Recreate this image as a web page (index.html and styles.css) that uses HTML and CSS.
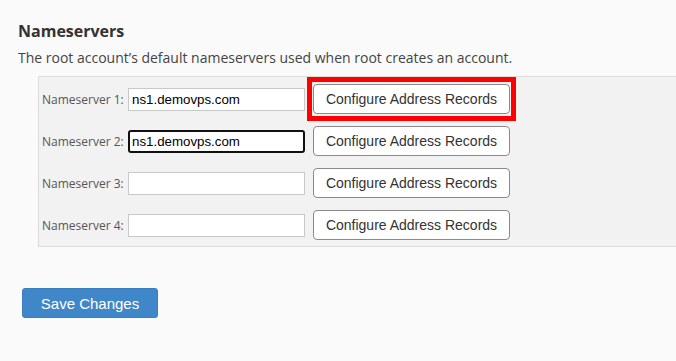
FILE: index.html
```html
<!DOCTYPE html>
<html lang="en">
<head>
    <meta charset="UTF-8">
    <meta name="viewport" content="width=device-width, initial-scale=1.0">
    <title>Nameservers</title>
    <link rel="stylesheet" href="styles.css">
</head>
<body>
    <div class="section">
        <h3 class="section-title">Nameservers</h3>
        <p class="section-desc">The root account’s default nameservers used when root creates an account.</p>

        <div class="ns-table">
            <label class="ns-label" for="ns1">Nameserver 1:</label>
            <input class="ns-input" id="ns1" type="text" value="ns1.demovps.com">
            <div class="btn-wrap highlight">
                <button class="btn-config" type="button">Configure Address Records</button>
            </div>

            <label class="ns-label" for="ns2">Nameserver 2:</label>
            <input class="ns-input focused" id="ns2" type="text" value="ns1.demovps.com">
            <div class="btn-wrap">
                <button class="btn-config" type="button">Configure Address Records</button>
            </div>

            <label class="ns-label" for="ns3">Nameserver 3:</label>
            <input class="ns-input" id="ns3" type="text" value="">
            <div class="btn-wrap">
                <button class="btn-config" type="button">Configure Address Records</button>
            </div>

            <label class="ns-label" for="ns4">Nameserver 4:</label>
            <input class="ns-input" id="ns4" type="text" value="">
            <div class="btn-wrap">
                <button class="btn-config" type="button">Configure Address Records</button>
            </div>
        </div>

        <div class="form-actions">
            <button class="btn-save" type="submit">Save Changes</button>
        </div>
    </div>
</body>
</html>
```

FILE: styles.css
```css
body {
    margin: 0;
    padding: 0;
    background-color: #fafafa;
    font-family: "Open Sans", Arial, sans-serif;
    color: #333;
    overflow: hidden;
}

.section {
    padding: 20px 0 0 18px;
}

.section-title {
    margin: 0;
    font-size: 16px;
    font-weight: 700;
    line-height: 22px;
    color: #333;
}

.section-desc {
    margin: 6px 0 0 0;
    font-size: 14px;
    line-height: 20px;
    color: #444;
}

.ns-table {
    display: grid;
    grid-template-columns: 86px 185px auto;
    justify-content: start;
    align-items: center;
    row-gap: 12px;
    margin: 8px 0 0 20px;
    padding: 7px 0 6px 3px;
    background: #f2f2f2;
    border: 1px solid #dcdcdc;
    border-right: 0;
}

.ns-label {
    font-size: 12px;
    color: #555;
}

.ns-input {
    box-sizing: border-box;
    width: 177px;
    height: 23px;
    padding: 1px 3px;
    border: 1px solid #c8c8c8;
    background: #fff;
    font-family: "Liberation Sans", Arial, sans-serif;
    font-size: 13.3px;
    color: #000;
}

.ns-input.focused {
    border: 2px solid #111;
    border-radius: 3px;
    padding: 0 2px;
}

.btn-wrap {
    position: relative;
    display: flex;
}

/* red marker drawn over the first button */
.btn-wrap.highlight::after {
    content: "";
    position: absolute;
    top: -7px;
    right: -6px;
    bottom: -7px;
    left: -6px;
    border: 5px solid #ff0000;
}

.btn-config {
    box-sizing: border-box;
    width: 197px;
    height: 30px;
    padding: 0;
    background: #fff;
    border: 1px solid #8a8a8a;
    border-radius: 4px;
    font-family: "Liberation Sans", Arial, sans-serif;
    font-size: 14px;
    color: #333;
    cursor: pointer;
}

.form-actions {
    margin: 41px 0 0 4px;
}

.btn-save {
    box-sizing: border-box;
    width: 136px;
    height: 30px;
    background: #3f87c8;
    border: 1px solid #3a7fbd;
    border-radius: 3px;
    font-family: "Liberation Sans", Arial, sans-serif;
    font-size: 15px;
    color: #fff;
    cursor: pointer;
}
```
